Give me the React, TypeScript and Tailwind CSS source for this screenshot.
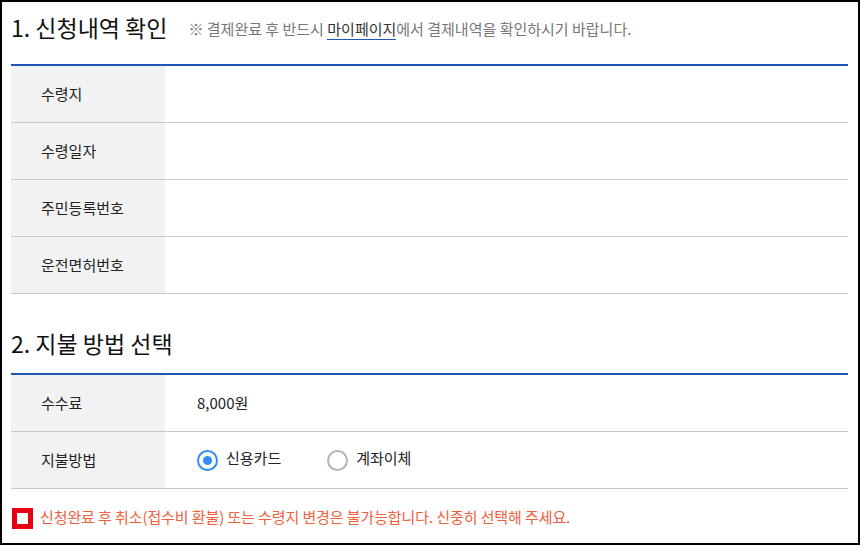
const font = { fontFamily: '"Noto Sans CJK KR", "Noto Sans", sans-serif' }

function Row({ label, children }: { label: string; children?: React.ReactNode }) {
  return (
    <div className="flex h-[57px] border-b border-[#c8c8c8]">
      <div className="flex w-[154px] items-center bg-[#f2f2f2] pl-[30px] text-[15px] text-[#222]">{label}</div>
      <div className="flex flex-1 items-center pl-[32px] text-[15px] text-[#222]">{children}</div>
    </div>
  )
}

function Radio({ checked, label }: { checked?: boolean; label: string }) {
  return (
    <label className="flex items-center gap-[8px]">
      {checked ? (
        <span className="flex h-[21px] w-[21px] items-center justify-center rounded-full border-2 border-[#2f8ff0]">
          <span className="h-[9px] w-[9px] rounded-full bg-[#2f8ff0]" />
        </span>
      ) : (
        <span className="h-[21px] w-[21px] rounded-full border-2 border-[#b4b4b4]" />
      )}
      <span className="-mt-[3px]">{label}</span>
    </label>
  )
}

export default function App() {
  return (
    <div style={font} className="h-[545px] w-[860px] border-2 border-black bg-white pl-[9px] pr-[10px]">
      {/* 1. 신청내역 확인 */}
      <div className="flex h-[62px] items-start pt-[10px]">
        <h2 className="text-[23px] leading-[30px] text-[#111]">1. 신청내역 확인</h2>
        <p className="ml-[21px] mt-[6px] text-[15px] leading-[22px] text-[#777]">
          ※ 결제완료 후 반드시{' '}
          <span className="border-b border-[#1f55b5] text-[#333]">마이페이지</span>에서 결제내역을 확인하시기 바랍니다.
        </p>
      </div>
      <div className="border-t-2 border-[#1f55b5]">
        <Row label="수령지" />
        <Row label="수령일자" />
        <Row label="주민등록번호" />
        <Row label="운전면허번호" />
      </div>

      {/* 2. 지불 방법 선택 */}
      <div className="flex h-[79px] items-start pt-[34px]">
        <h2 className="text-[23px] leading-[30px] text-[#111]">2. 지불 방법 선택</h2>
      </div>
      <div className="border-t-2 border-[#1f55b5]">
        <Row label="수수료">8,000원</Row>
        <Row label="지불방법">
          <div className="flex items-center gap-[46px]">
            <Radio checked label="신용카드" />
            <Radio label="계좌이체" />
          </div>
        </Row>
      </div>

      <div className="flex items-center gap-[7px] pl-[1px] pt-[19px]">
        <span className="h-[21px] w-[21px] border-[5px] border-[#e60012] bg-white" />
        <span className="-mt-[2px] text-[15px] tracking-[-0.1px] text-[#f0603f]">
          신청완료 후 취소(접수비 환불) 또는 수령지 변경은 불가능합니다. 신중히 선택해 주세요.
        </span>
      </div>
    </div>
  )
}
